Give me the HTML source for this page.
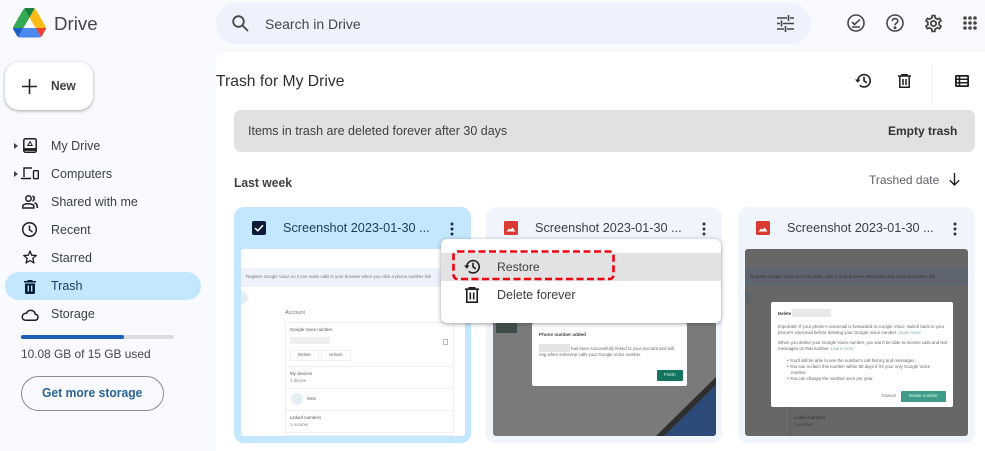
<!DOCTYPE html>
<html><head><meta charset="utf-8"><style>
html,body{margin:0;padding:0}
body{width:985px;height:451px;overflow:hidden;position:relative;background:#f8fafd;font-family:"Liberation Sans",sans-serif;color:#3c4043}
.a{position:absolute}
.t{position:absolute;white-space:nowrap;line-height:16px}
svg{position:absolute;overflow:visible}
.nav{font-size:12.5px;color:#3c4043;left:51px}
.card{position:absolute;top:207px;width:237px;height:236px;border-radius:10px;background:#f0f4fb}
.thumb{position:absolute;top:249px;height:187px;overflow:hidden;border-radius:3px;filter:blur(.35px)}
.ct{font-size:12.7px;top:220px}
.xs{position:absolute;white-space:nowrap;line-height:8px;font-size:4.4px;color:#666}
.line{position:absolute;background:#f0f0f0;height:1px}
</style></head><body>
<svg style="left:13px;top:8px" width="33" height="29.500" viewBox="0 0 87.300 78">
<path d="m6.600 66.850 3.850 6.650c.8 1.400 1.950 2.500 3.300 3.300l13.750-23.800h-27.500c0 1.550.4 3.100 1.200 4.500z" fill="#1a5fc4"/>
<path d="m43.650 25-13.750-23.800c-1.350.8-2.500 1.900-3.300 3.300l-25.400 44a9.060 9.060 0 0 0 -1.200 4.500h27.500z" fill="#34a853"/>
<path d="m73.550 76.800c1.350-.8 2.500-1.900 3.300-3.300l1.600-2.750 7.650-13.250c.8-1.400 1.200-2.950 1.200-4.500h-27.502l5.852 11.500z" fill="#ea4335"/>
<path d="m43.650 25 13.750-23.800c-1.350-.8-2.900-1.200-4.500-1.200h-18.500c-1.600 0-3.150.45-4.500 1.200z" fill="#188038"/>
<path d="m59.800 53h-32.300l-13.750 23.800c1.350.8 2.900 1.200 4.500 1.200h50.800c1.600 0 3.150-.45 4.500-1.200z" fill="#4a8af0"/>
<path d="m73.400 26.500-12.700-22c-.8-1.400-1.950-2.500-3.300-3.300l-13.750 23.800 16.150 28h27.450c0-1.550-.4-3.100-1.200-4.500z" fill="#f9bc15"/>
</svg>
<div class="t" style="left:54px;top:12px;font-size:18.700px;line-height:24px;color:#444746">Drive</div>
<div class="a" style="left:5px;top:62px;width:88px;height:48px;background:#fff;border-radius:14px;box-shadow:0 1px 3px rgba(60,64,67,.45)"></div>
<svg style="left:22px;top:79px" width="15" height="15"><path d="M7.500 0V15M0 7.500H15" stroke="#202124" stroke-width="1.600"/></svg>
<div class="t" style="left:51px;top:78px;font-size:12.500px;font-weight:700;color:#3c4043;transform:scaleX(.96);transform-origin:left">New</div>

<!-- search -->
<div class="a" style="left:216px;top:3px;width:595px;height:41px;border-radius:21px;background:#edf2fc"></div>
<svg style="left:232px;top:15px" width="17" height="17" fill="none" stroke="#444746" stroke-width="1.800"><circle cx="6.500" cy="6.500" r="5.300"/><path d="M10.500 10.500 16 16"/></svg>
<div class="t" style="left:265px;top:16px;font-size:14px;color:#444746">Search in Drive</div>
<svg style="left:777px;top:15px" width="17" height="17" stroke="#444746" stroke-width="1.600" fill="none"><path d="M0 3H10M13 3H17M11.500 0V6M0 8.500H3M6 8.500H17M4.500 5.500V11.500M0 14H7M10 14H17M8.500 11V17"/></svg>

<!-- top right icons -->
<svg style="left:847px;top:14px" width="18" height="18" fill="none" stroke="#444746" stroke-width="1.600"><circle cx="9" cy="9" r="8"/><path d="M5 8 7.500 10.500 13 5.500M5 13H13"/></svg>
<svg style="left:886px;top:14px" width="18" height="18" fill="none" stroke="#444746" stroke-width="1.600"><circle cx="9" cy="9" r="8"/><path d="M6.300 7C6.300 3.800 11.800 3.800 11.800 7 11.800 9 9 9 9 11.300"/><circle cx="9" cy="13.700" r=".6" fill="#444746"/></svg>
<svg style="left:923px;top:12.500px" width="21" height="21" viewBox="0 0 24 24" fill="#444746"><path d="M19.430 12.980c.04-.32.07-.64.07-.98 0-.34-.03-.66-.07-.98l2.110-1.650c.19-.15.24-.42.12-.64l-2-3.460c-.09-.16-.26-.25-.44-.25-.06 0-.12.01-.17.03l-2.490 1c-.52-.4-1.080-.73-1.690-.98l-.38-2.650C14.460 2.180 14.250 2 14 2h-4c-.25 0-.46.18-.49.42l-.38 2.650c-.61.25-1.170.59-1.690.98l-2.490-1c-.06-.02-.12-.03-.18-.03-.17 0-.34.09-.43.25l-2 3.460c-.13.22-.07.49.12.64l2.110 1.650c-.04.32-.07.65-.07.98 0 .33.03.66.07.98l-2.110 1.650c-.19.15-.24.42-.12.64l2 3.460c.09.16.26.25.44.25.06 0 .12-.01.17-.03l2.490-1c.52.4 1.080.73 1.690.98l.38 2.650c.03.24.24.42.49.42h4c.25 0 .46-.18.49-.42l.38-2.650c.61-.25 1.170-.59 1.690-.98l2.490 1c.06.02.12.03.18.03.17 0 .34-.09.43-.25l2-3.460c.12-.22.07-.49-.12-.64l-2.110-1.650zm-1.980-1.710c.04.31.05.52.05.73 0 .21-.02.43-.05.73l-.14 1.130.89.7 1.080.84-.7 1.210-1.270-.51-1.040-.42-.9.68c-.43.32-.84.56-1.250.73l-1.060.43-.16 1.130-.2 1.350h-1.400l-.19-1.350-.16-1.130-1.060-.43c-.43-.18-.83-.41-1.230-.71l-.91-.7-1.060.43-1.270.51-.7-1.210 1.080-.84.89-.7-.14-1.130c-.03-.31-.05-.54-.05-.74s.02-.43.05-.73l.14-1.130-.89-.7-1.080-.84.7-1.210 1.270.51 1.040.42.9-.68c.43-.32.84-.56 1.250-.73l1.060-.43.16-1.130.2-1.350h1.390l.19 1.350.16 1.130 1.060.43c.43.18.83.41 1.230.71l.91.7 1.060-.43 1.270-.51.7 1.210-1.070.85-.89.7.14 1.130zM12 8c-2.210 0-4 1.790-4 4s1.790 4 4 4 4-1.790 4-4-1.790-4-4-4zm0 6c-1.100 0-2-.9-2-2s.9-2 2-2 2 .9 2 2-.9 2-2 2z"/></svg>
<svg style="left:963px;top:16px" width="14" height="14" fill="#444746"><circle cx="2" cy="2" r="1.800"/><circle cx="7" cy="2" r="1.800"/><circle cx="12" cy="2" r="1.800"/><circle cx="2" cy="7" r="1.800"/><circle cx="7" cy="7" r="1.800"/><circle cx="12" cy="7" r="1.800"/><circle cx="2" cy="12" r="1.800"/><circle cx="7" cy="12" r="1.800"/><circle cx="12" cy="12" r="1.800"/></svg>

<!-- sidebar -->
<svg style="left:14px;top:143px" width="4" height="6"><path d="M0 0 4 3 0 6z" fill="#444"/></svg>
<svg style="left:23px;top:138px" width="14" height="15" fill="none" stroke="#1f1f1f" stroke-width="1.500"><rect x=".8" y=".8" width="12.400" height="13.400" rx="1.500"/><path d="M1 11.500H13" stroke-width="2.800"/><path d="M7 3.500 4.800 7.500H9.200z" stroke-width="1"/></svg>
<div class="t nav" style="top:138px">My Drive</div>
<svg style="left:14px;top:171px" width="4" height="6"><path d="M0 0 4 3 0 6z" fill="#444"/></svg>
<svg style="left:21px;top:167px" width="18" height="13" fill="none" stroke="#1f1f1f" stroke-width="1.400"><path d="M11 1H3V10M0 11.500H10"/><rect x="12.500" y="3.700" width="4.800" height="8" rx=".8"/></svg>
<div class="t nav" style="top:166px">Computers</div>
<svg style="left:22px;top:195px" width="16" height="14" fill="none" stroke="#1f1f1f" stroke-width="1.500"><circle cx="6.500" cy="3.500" r="2.700"/><path d="M.8 13V11C.8 8 11.800 8 11.800 11V13zM10.500 1A2.700 2.700 0 0 1 10.500 6M12.500 8C15 8.500 15.300 10 15.300 13"/></svg>
<div class="t nav" style="top:194px">Shared with me</div>
<svg style="left:22px;top:222px" width="15" height="15" fill="none" stroke="#1f1f1f" stroke-width="1.500"><circle cx="7.500" cy="7.500" r="6.800"/><path d="M7.500 3.500V7.800L10.500 10"/></svg>
<div class="t nav" style="top:222px">Recent</div>
<svg style="left:23px;top:250px" width="14" height="14" fill="none" stroke="#1f1f1f" stroke-width="1.300" stroke-linejoin="round"><path d="M7 1 8.700 5.200 13.300 5.500 9.800 8.400 10.900 13 7 10.500 3.100 13 4.200 8.400.7 5.500 5.300 5.200z"/></svg>
<div class="t nav" style="top:250px">Starred</div>
<div class="a" style="left:5px;top:272px;width:196px;height:28px;border-radius:14px;background:#c2e7ff"></div>
<svg style="left:24px;top:280px" width="12" height="14" fill="#001d35"><path d="M4 0H8L9 1H12V2.500H0V1H3zM1 3.500H11V12.500Q11 14 9.500 14H2.500Q1 14 1 12.500z"/><path d="M4.300 5.500V11.500M7.700 5.500V11.500" stroke="#c2e7ff" stroke-width="1.400"/></svg>
<div class="t nav" style="top:278px;color:#1f3b57">Trash</div>
<svg style="left:21px;top:309px" width="18" height="12" fill="none" stroke="#1f1f1f" stroke-width="1.500"><path d="M4.500 11.200H14C18 11.200 18 5.500 14.300 5.200 13.300 .5 7 0 5.500 4.200 .3 4 -.3 11.200 4.500 11.200z"/></svg>
<div class="t nav" style="top:306px">Storage</div>
<div class="a" style="left:21px;top:335px;width:153px;height:4px;background:#dadce0;border-radius:2px"></div>
<div class="a" style="left:21px;top:335px;width:103px;height:4px;background:#1a5fb4;border-radius:2px"></div>
<div class="t" style="left:21px;top:346px;font-size:11.900px;color:#444746">10.08 GB of 15 GB used</div>
<div class="a" style="left:21px;top:376px;width:141px;height:33px;border:1px solid #8a8d90;border-radius:18px"></div>
<div class="t" style="left:42px;top:385px;font-size:12.500px;font-weight:700;color:#2b6391;transform:scaleX(.97);transform-origin:left">Get more storage</div>

<!-- main -->
<div class="a" style="left:216px;top:52px;width:769px;height:399px;background:#fff;border-radius:10px 0 0 0"></div>
<div class="t" style="left:216px;top:73px;font-size:15.700px;line-height:18px;color:#2d2f31">Trash for My Drive</div>
<svg style="left:855px;top:73px" width="16" height="15" fill="none" stroke="#1f1f1f" stroke-width="1.600"><path d="M2.800 7.500A6.200 6.200 0 1 1 4.800 12.300M9 3.700V7.800L11.800 9.800"/><path d="M0 6.500H5.500L2.800 9.800z" fill="#1f1f1f" stroke="none"/></svg>
<svg style="left:898px;top:74px" width="13" height="14" fill="none" stroke="#1f1f1f" stroke-width="1.500"><path d="M0 2H13M4 2V.7H9V2M1.800 2.500V13.200H11.200V2.500M5 5V11M8 5V11"/></svg>
<div class="a" style="left:932px;top:64px;width:1px;height:38px;background:#f0f1f2"></div>
<svg style="left:955px;top:75px" width="14" height="12" fill="none" stroke="#1f1f1f" stroke-width="1.800"><rect x=".9" y=".9" width="12.200" height="10.200" rx=".5"/><path d="M0 4.300H14M0 7.700H14M4.500 1V11" stroke-width="1.500"/></svg>
<div class="a" style="left:234px;top:110px;width:741px;height:42px;border-radius:7px;background:#e1e1e1"></div>
<div class="t" style="left:248px;top:123px;font-size:12.500px;color:#3c4043">Items in trash are deleted forever after 30 days</div>
<div class="t" style="left:888px;top:123px;font-size:12px;font-weight:700;color:#333">Empty trash</div>
<div class="t" style="left:234px;top:175px;font-size:12.500px;font-weight:700;color:#3c4043;transform:scaleX(.97);transform-origin:left">Last week</div>
<div class="t" style="left:869px;top:172px;font-size:12px;color:#5f6368">Trashed date</div>
<svg style="left:949px;top:173px" width="11" height="13" fill="none" stroke="#1f1f1f" stroke-width="1.400"><path d="M5.500 0V12M.8 7.200 5.500 12 10.200 7.200"/></svg>

<!-- cards -->
<div class="card" style="left:234px;background:#c2e7ff"></div>
<div class="card" style="left:486px;width:236px"></div>
<div class="card" style="left:738px"></div>

<div class="a" style="left:252px;top:221px;width:14px;height:14px;border-radius:2px;background:#0d1c33"></div>
<svg style="left:254px;top:224px" width="10" height="8" fill="none" stroke="#fff" stroke-width="1.500"><path d="M1 4 3.800 6.800 9 1.200"/></svg>
<div class="t ct" style="left:283px;color:#1f3b57">Screenshot 2023-01-30 ...</div>
<svg style="left:450px;top:222px" width="4" height="14" fill="#1f2f40"><circle cx="2" cy="2" r="1.500"/><circle cx="2" cy="7" r="1.500"/><circle cx="2" cy="12" r="1.500"/></svg>

<svg style="left:504px;top:221px" width="14" height="14"><rect width="14" height="14" rx="1.500" fill="#d93a32"/><path d="M2.500 10.500 5 7.500 6.500 8.800 8.500 6.500 11.500 10.500z" fill="#fff"/></svg>
<div class="t ct" style="left:535px;color:#3c4043">Screenshot 2023-01-30 ...</div>
<svg style="left:702px;top:222px" width="4" height="14" fill="#333"><circle cx="2" cy="2" r="1.500"/><circle cx="2" cy="7" r="1.500"/><circle cx="2" cy="12" r="1.500"/></svg>

<svg style="left:756px;top:221px" width="14" height="14"><rect width="14" height="14" rx="1.500" fill="#d93a32"/><path d="M2.500 10.500 5 7.500 6.500 8.800 8.500 6.500 11.500 10.500z" fill="#fff"/></svg>
<div class="t ct" style="left:787px;color:#3c4043">Screenshot 2023-01-30 ...</div>
<svg style="left:953px;top:222px" width="4" height="14" fill="#333"><circle cx="2" cy="2" r="1.500"/><circle cx="2" cy="7" r="1.500"/><circle cx="2" cy="12" r="1.500"/></svg>

<!-- thumb 1 -->
<div class="thumb" style="left:241px;width:224px;background:#fff">
 <div class="a" style="left:0;top:19px;width:224px;height:19px;background:#edf2fb"></div>
 <div class="xs" style="left:5px;top:24px;color:#777">Register Google Voice so it can make calls in your browser when you click a phone number link</div>
 <div class="a" style="left:-6px;top:42px;width:13px;height:13px;border-radius:50%;background:#e3eef5"></div>
 <div class="t" style="left:44px;top:60px;font-size:5.500px;line-height:8px;color:#777">Account</div>
 <div class="a" style="left:44px;top:73px;width:169px;height:114px;border:1px solid #f0f0f0;box-sizing:border-box"></div>
 <div class="xs" style="left:49px;top:77px;color:#555">Google Voice number</div>
 <div class="a" style="left:49px;top:88px;width:40px;height:7px;background:#efefef"></div>
 <div class="a" style="left:202px;top:90px;width:5px;height:6px;border:1px solid #bbb;box-sizing:border-box"></div>
 <div class="a" style="left:49px;top:101px;width:29px;height:11px;border:1px solid #f0f0f0;box-sizing:border-box"></div>
 <div class="xs" style="left:57px;top:102px">Delete</div>
 <div class="a" style="left:80px;top:101px;width:30px;height:11px;border:1px solid #f0f0f0;box-sizing:border-box"></div>
 <div class="xs" style="left:88px;top:102px">Unlock</div>
 <div class="line" style="left:44px;top:117px;width:169px"></div>
 <div class="xs" style="left:49px;top:121px;color:#555">My devices</div>
 <div class="xs" style="left:49px;top:128px;color:#888">1 device</div>
 <div class="line" style="left:44px;top:139px;width:169px"></div>
 <div class="a" style="left:50px;top:144px;width:12px;height:12px;border-radius:50%;background:#e3eef5"></div>
 <div class="xs" style="left:66px;top:146px">Web</div>
 <div class="line" style="left:44px;top:161px;width:169px"></div>
 <div class="xs" style="left:49px;top:165px;color:#555">Linked numbers</div>
 <div class="xs" style="left:49px;top:172px;color:#888">1 number</div>
 <div class="line" style="left:44px;top:183px;width:169px"></div>
</div>

<!-- thumb 2 -->
<div class="thumb" style="left:493px;width:223px;background:#7a7a7a">
 <div class="a" style="left:3px;top:71px;width:21px;height:13px;background:#3f4b4a"></div>
 <div class="a" style="left:39px;top:74px;width:155px;height:63px;background:#fff;border-radius:2px"></div>
 <div class="t" style="left:46px;top:82px;font-size:4.600px;line-height:8px;color:#444;font-weight:700">Phone number added</div>
 <div class="a" style="left:46px;top:95px;width:31px;height:8px;background:#e4e4e4"></div>
 <div class="xs" style="left:78px;top:96px">has been successfully linked to your account and will</div>
 <div class="xs" style="left:46px;top:102px">ring when someone calls your Google Voice number</div>
 <div class="a" style="left:164px;top:121px;width:26px;height:11px;background:#12735f;border-radius:1px"></div>
 <div class="xs" style="left:171px;top:122px;color:#dfe">Finish</div>
 <svg style="left:0;top:0" width="223" height="187"><path d="M163 187 223 128V136L171 187z" fill="#2e2e2e"/><path d="M171 187 223 136V187z" fill="#2c4a78"/></svg>
</div>

<!-- thumb 3 -->
<div class="thumb" style="left:745px;width:223px;background:#676767">
 <div class="a" style="left:0;top:19px;width:223px;height:18px;background:#5e6470"></div>
 <div class="xs" style="left:5px;top:24px;color:#333">Register Google Voice so it can make calls in your browser when you click a phone number link</div>
 <div class="a" style="left:-6px;top:42px;width:13px;height:13px;border-radius:50%;background:#5d6266"></div>
 <div class="a" style="left:26px;top:53px;width:182px;height:105px;background:#fff;border-radius:2px"></div>
 <div class="xs" style="left:33px;top:61px;color:#333;font-weight:700">Delete</div>
 <div class="a" style="left:47px;top:60px;width:39px;height:8px;background:#e8e8e8"></div>
 <div class="xs" style="left:33px;top:74px">Important: If your phone's voicemail is forwarded to Google Voice, switch back to your</div>
 <div class="xs" style="left:33px;top:80px">phone's voicemail before deleting your Google Voice number. <span style="color:#7aa">Learn more</span></div>
 <div class="xs" style="left:33px;top:90px">When you delete your Google Voice number, you won't be able to receive calls and text</div>
 <div class="xs" style="left:33px;top:96px">messages on that number. <span style="color:#7aa">Learn more</span></div>
 <div class="xs" style="left:42px;top:108px">• You'll still be able to see the number's call history and messages.</div>
 <div class="xs" style="left:42px;top:114px">• You can reclaim this number within 90 days if it's your only Google Voice</div>
 <div class="xs" style="left:46px;top:120px">number.</div>
 <div class="xs" style="left:42px;top:126px">• You can change the number once per year.</div>
 <div class="xs" style="left:137px;top:143px">Cancel</div>
 <div class="a" style="left:156px;top:142px;width:45px;height:11px;background:#3f9a8a;border-radius:1px"></div>
 <div class="xs" style="left:164px;top:143px;color:#dfe">Delete number</div>
 <div class="a" style="left:45px;top:158px;width:168px;height:29px;border-left:1px solid #5c5c5c"></div>
 <div class="xs" style="left:49px;top:165px;color:#2f2f2f">Linked numbers</div>
 <div class="xs" style="left:49px;top:172px;color:#3f3f3f">1 number</div>
</div>

<!-- menu -->
<div class="a" style="left:441px;top:239px;width:280px;height:84px;background:#fff;border-radius:6px;box-shadow:0 1px 4px rgba(60,64,67,.5)"></div>
<div class="a" style="left:441px;top:253px;width:280px;height:28px;background:#e2e2e2"></div>
<svg style="left:464px;top:259px" width="16" height="15" fill="none" stroke="#1f1f1f" stroke-width="1.600"><path d="M2.800 7.500A6.200 6.200 0 1 1 4.800 12.300M9 3.700V7.800L11.800 9.800"/><path d="M0 6.500H5.500L2.800 9.800z" fill="#1f1f1f" stroke="none"/></svg>
<svg style="left:465px;top:287px" width="14" height="16" fill="none" stroke="#1f1f1f" stroke-width="1.600"><path d="M0 2.200H14M4.300 2V.8H9.700V2M1.800 2.500V15.200H12.200V2.500M5.300 5.500V12.500M8.700 5.500V12.500"/></svg>
<div class="t" style="left:497px;top:259px;font-size:12.200px;color:#3c4043">Restore</div>
<div class="t" style="left:497px;top:287px;font-size:12.500px;color:#3c4043">Delete forever</div>
<svg style="left:452px;top:250px" width="164" height="31" fill="none"><rect x="1.500" y="1.500" width="160" height="27.500" rx="4" stroke="#ee0010" stroke-width="2.600" stroke-dasharray="7 3.500"/></svg>
</body></html>
